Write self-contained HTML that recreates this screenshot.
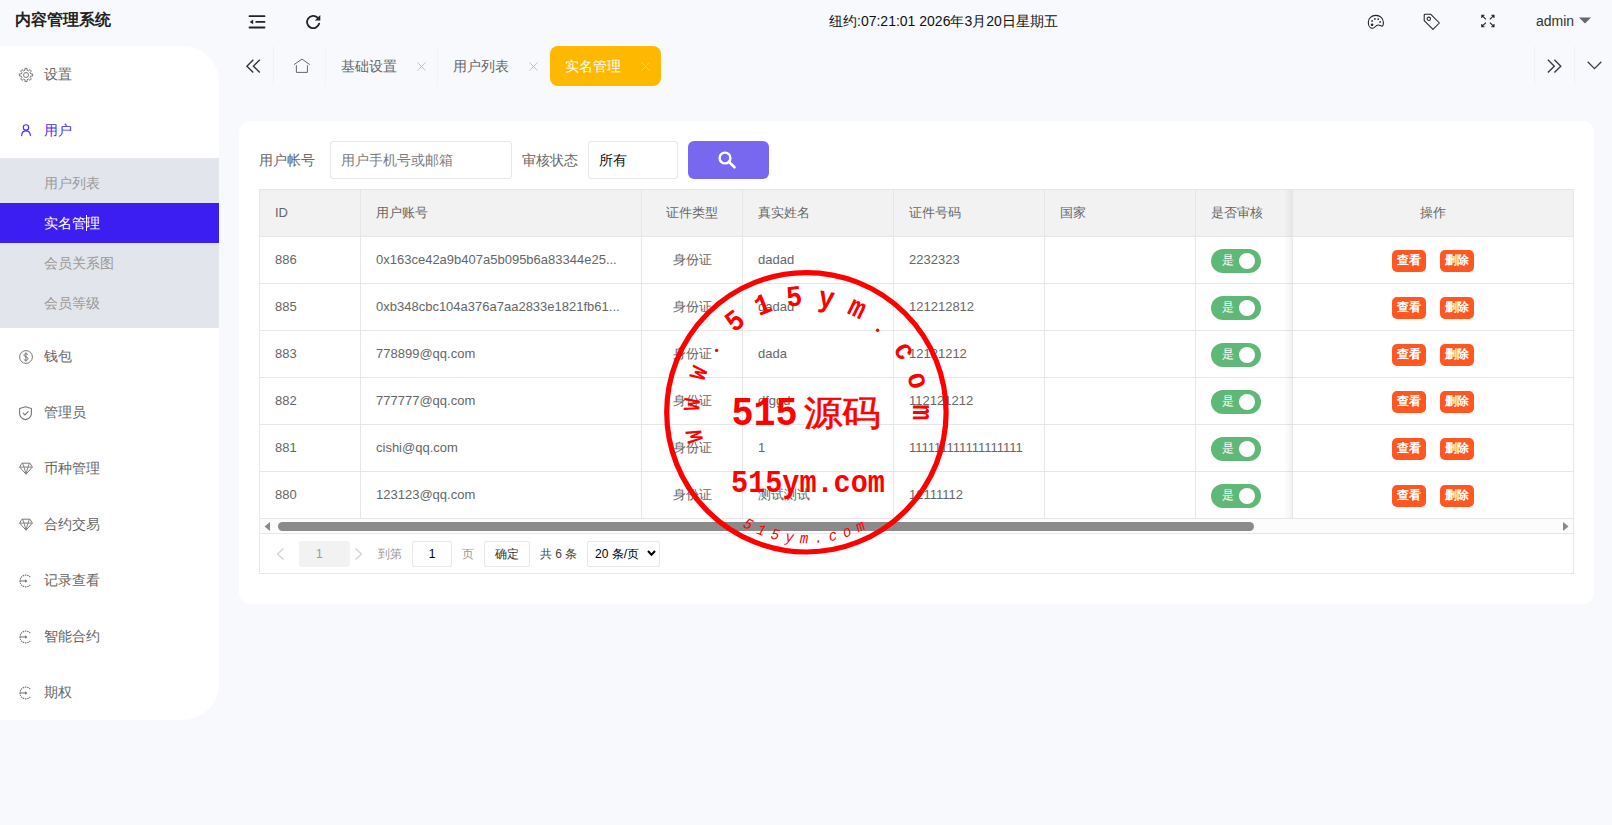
<!DOCTYPE html>
<html><head><meta charset="utf-8"><title>内容管理系统</title>
<style>
*{box-sizing:border-box;margin:0;padding:0}
html,body{width:1612px;height:825px;overflow:hidden}
body{background:#f8f9fc;font-family:"Liberation Sans",sans-serif;font-size:14px;color:#666;position:relative}
.a{position:absolute;white-space:nowrap}
.t14{font-size:14px;line-height:20px}
.t12{font-size:12px;line-height:16px}
.t13{font-size:13px;line-height:20px}
svg{position:absolute;overflow:visible}
</style></head><body>

<div class="a" style="left:15px;top:10px;font-size:16px;line-height:20px;font-weight:bold;color:#222">内容管理系统</div>
<svg style="left:249px;top:14px" width="16" height="16" viewBox="0 0 16 16">
<path d="M0.5 2.2H15.5M7.2 7.9H15.5M0.5 13.5H15.5" stroke="#222" stroke-width="1.8" stroke-linecap="round" fill="none"/>
<path d="M0.6 7.9L4.2 5.6V10.2Z" fill="#222"/></svg>
<svg style="left:305px;top:14px" width="16" height="16" viewBox="0 0 16 16">
<path d="M14.2 9.6A6.2 6.2 0 1 1 12.6 3.6" stroke="#222" stroke-width="1.8" fill="none" stroke-linecap="round"/>
<path d="M15.3 1V6.5H9.8Z" fill="#222"/></svg>
<div class="a t14" style="left:829px;top:11px;color:#111">纽约:07:21:01 2026年3月20日星期五</div>
<svg style="left:1367px;top:14px" width="18" height="16" viewBox="0 0 18 16">
<path d="M8.8 1.4C4.5 1.4 1.3 4.4 1.3 8.2C1.3 11.9 3.3 14.3 5.6 14.3C8 14.3 8.4 11 11.2 11C13.2 11 14.1 12.2 15 12.2C16.2 12.2 16.4 10.6 16.4 8.6C16.4 4.5 13.1 1.4 8.8 1.4Z" stroke="#222" stroke-width="1.1" fill="none"/>
<circle cx="5.1" cy="10.7" r="1.3" fill="#222"/><circle cx="5.1" cy="6.9" r="0.85" fill="#222"/><circle cx="7.9" cy="4.9" r="0.85" fill="#222"/>
<circle cx="11.2" cy="5.2" r="0.85" fill="#222"/><circle cx="13.1" cy="7.9" r="0.85" fill="#222"/></svg>
<svg style="left:1423px;top:13px" width="18" height="18" viewBox="0 0 18 18">
<path d="M2.3 1.2H7.6L16.4 10L10 16.4L1.2 7.6V2.3Q1.2 1.2 2.3 1.2Z" stroke="#222" stroke-width="1.05" fill="none" stroke-linejoin="round"/>
<circle cx="5.8" cy="5.8" r="1.7" stroke="#222" stroke-width="1.05" fill="none"/></svg>
<svg style="left:1481px;top:14px" width="14" height="14" viewBox="0 0 14 14">
<path d="M0.8 3.9V1.2H3.5M0.8 1.2L4.9 5.3M13 3.9V1.2H10.3M13 1.2L8.9 5.3M0.8 10V12.7H3.5M0.8 12.7L4.9 8.6M13 10V12.7H10.3M13 12.7L8.9 8.6" stroke="#222" stroke-width="1.1" fill="none"/></svg>
<div class="a t14" style="left:1536px;top:11px;color:#333">admin</div>
<svg style="left:1579px;top:17px" width="12" height="7" viewBox="0 0 12 7"><path d="M0 0.5H12L6 6.5Z" fill="#666"/></svg>
<div class="a" style="left:0;top:46px;width:219px;height:674px;background:#fff;border-radius:0 36px 36px 0"></div>
<div class="a" style="left:0;top:158px;width:219px;height:170px;background:#e3e5ec"></div>
<div class="a" style="left:0;top:203px;width:219px;height:40px;background:#3d1ef2"></div>
<div class="a t14" style="left:44px;top:64px;color:#666">设置</div>
<svg style="left:19px;top:68px" width="14" height="14" viewBox="0 0 14 14"><path d="M5.92 2.32 L5.95 0.38 L8.05 0.38 L8.08 2.32 L9.54 2.93 L10.94 1.58 L12.42 3.06 L11.07 4.46 L11.68 5.92 L13.62 5.95 L13.62 8.05 L11.68 8.08 L11.07 9.54 L12.42 10.94 L10.94 12.42 L9.54 11.07 L8.08 11.68 L8.05 13.62 L5.95 13.62 L5.92 11.68 L4.46 11.07 L3.06 12.42 L1.58 10.94 L2.93 9.54 L2.32 8.08 L0.38 8.05 L0.38 5.95 L2.32 5.92 L2.93 4.46 L1.58 3.06 L3.06 1.58 L4.46 2.93Z" stroke="#777" stroke-width="1" fill="none" stroke-linejoin="round"/><circle cx="7" cy="7" r="2.5" stroke="#777" stroke-width="1" fill="none"/></svg>
<div class="a t14" style="left:44px;top:120px;color:#4b2bf5">用户</div>
<svg style="left:21px;top:124px" width="10" height="12" viewBox="0 0 10 12"><circle cx="5" cy="3.4" r="2.7" stroke="#4b2bf5" stroke-width="1.15" fill="none"/><path d="M0.6 11.6C0.8 8.4 2.6 6.9 5 6.9C7.4 6.9 9.2 8.4 9.4 11.6" stroke="#4b2bf5" stroke-width="1.15" fill="none" stroke-linecap="round"/></svg>
<div class="a t14" style="left:44px;top:346px;color:#666">钱包</div>
<svg style="left:19px;top:350px" width="14" height="14" viewBox="0 0 14 14"><circle cx="7" cy="7" r="6.4" stroke="#777" stroke-width="1" fill="none"/><path d="M8.8 4.6C8.3 3.9 7.6 3.7 6.9 3.7C5.8 3.7 5 4.3 5 5.2C5 7.2 9 6.4 9 8.7C9 9.6 8.1 10.3 6.9 10.3C6.1 10.3 5.3 10 4.9 9.3M6.9 2.4V11.6" stroke="#777" stroke-width="1" fill="none"/></svg>
<div class="a t14" style="left:44px;top:402px;color:#666">管理员</div>
<svg style="left:19px;top:406px" width="14" height="14" viewBox="0 0 14 14"><path d="M6.5 0.7L12.4 2.6V7.4C12.4 10.6 9.6 12.7 6.5 13.8C3.4 12.7 0.6 10.6 0.6 7.4V2.6Z" stroke="#777" stroke-width="1.1" fill="none" stroke-linejoin="round"/><path d="M3.8 6.9L5.9 9L9.4 5.3" stroke="#777" stroke-width="1.1" fill="none"/></svg>
<div class="a t14" style="left:44px;top:458px;color:#666">币种管理</div>
<svg style="left:19px;top:462px" width="14" height="14" viewBox="0 0 14 14"><path d="M2.9 1.2H10.9L13.4 5.1L7 12.2L0.6 5.1Z" stroke="#777" stroke-width="1" fill="none" stroke-linejoin="round"/><path d="M0.8 5.1H13.2M3.6 1.4L5 5.1L7 11.8L9 5.1L10.4 1.4" stroke="#777" stroke-width="0.9" fill="none"/></svg>
<div class="a t14" style="left:44px;top:514px;color:#666">合约交易</div>
<svg style="left:19px;top:518px" width="14" height="14" viewBox="0 0 14 14"><path d="M2.9 1.2H10.9L13.4 5.1L7 12.2L0.6 5.1Z" stroke="#777" stroke-width="1" fill="none" stroke-linejoin="round"/><path d="M0.8 5.1H13.2M3.6 1.4L5 5.1L7 11.8L9 5.1L10.4 1.4" stroke="#777" stroke-width="0.9" fill="none"/></svg>
<div class="a t14" style="left:44px;top:570px;color:#666">记录查看</div>
<svg style="left:19px;top:574px" width="14" height="14" viewBox="0 0 14 14"><path d="M11.3 3.1A5.9 5.9 0 1 0 11.3 10.9" stroke="#777" stroke-width="1.1" fill="none" stroke-dasharray="1.5 0.7"/><path d="M0.9 7H6.4" stroke="#777" stroke-width="1.1" fill="none"/><path d="M6 5.2L8.6 7L6 8.8Z" fill="#777"/></svg>
<div class="a t14" style="left:44px;top:626px;color:#666">智能合约</div>
<svg style="left:19px;top:630px" width="14" height="14" viewBox="0 0 14 14"><path d="M11.3 3.1A5.9 5.9 0 1 0 11.3 10.9" stroke="#777" stroke-width="1.1" fill="none" stroke-dasharray="1.5 0.7"/><path d="M0.9 7H6.4" stroke="#777" stroke-width="1.1" fill="none"/><path d="M6 5.2L8.6 7L6 8.8Z" fill="#777"/></svg>
<div class="a t14" style="left:44px;top:682px;color:#666">期权</div>
<svg style="left:19px;top:686px" width="14" height="14" viewBox="0 0 14 14"><path d="M11.3 3.1A5.9 5.9 0 1 0 11.3 10.9" stroke="#777" stroke-width="1.1" fill="none" stroke-dasharray="1.5 0.7"/><path d="M0.9 7H6.4" stroke="#777" stroke-width="1.1" fill="none"/><path d="M6 5.2L8.6 7L6 8.8Z" fill="#777"/></svg>
<div class="a" style="left:86px;top:215px;width:1px;height:16px;background:#fff"></div>
<div class="a t14" style="left:44px;top:173px;color:#999">用户列表</div>
<div class="a t14" style="left:44px;top:213px;color:#fff">实名管理</div>
<div class="a t14" style="left:44px;top:253px;color:#999">会员关系图</div>
<div class="a t14" style="left:44px;top:293px;color:#999">会员等级</div>
<div class="a" style="left:273px;top:46px;width:1px;height:40px;background:#f2f2f3"></div>
<div class="a" style="left:325px;top:46px;width:1px;height:40px;background:#f2f2f3"></div>
<div class="a" style="left:437px;top:46px;width:1px;height:40px;background:#f2f2f3"></div>
<div class="a" style="left:549px;top:46px;width:1px;height:40px;background:#f2f2f3"></div>
<div class="a" style="left:1534px;top:46px;width:1px;height:40px;background:#f2f2f3"></div>
<div class="a" style="left:1574px;top:46px;width:1px;height:40px;background:#f2f2f3"></div>
<svg style="left:246px;top:59px" width="15" height="15" viewBox="0 0 15 15">
<path d="M7.3 0.8L0.9 7.2L7.3 13.6M13.8 0.8L7.4 7.2L13.8 13.6" stroke="#3a3434" stroke-width="1.4" fill="none"/></svg>
<svg style="left:293px;top:58px" width="18" height="15" viewBox="0 0 18 15">
<path d="M1 6.6L9 1.1L16.8 6.6M3.4 7.2V14.4H14.4V7.2" stroke="#666" stroke-width="1" fill="none"/></svg>
<div class="a t14" style="left:341px;top:56px;color:#666">基础设置</div>
<svg style="left:417px;top:62px" width="9" height="9" viewBox="0 0 9 9"><path d="M0.5 0.5L8.5 8.5M8.5 0.5L0.5 8.5" stroke="#c2c2c2" stroke-width="1" fill="none"/></svg>
<div class="a t14" style="left:453px;top:56px;color:#666">用户列表</div>
<svg style="left:529px;top:62px" width="9" height="9" viewBox="0 0 9 9"><path d="M0.5 0.5L8.5 8.5M8.5 0.5L0.5 8.5" stroke="#c2c2c2" stroke-width="1" fill="none"/></svg>
<div class="a" style="left:550px;top:46px;width:111px;height:40px;background:#ffb800;border-radius:8px"></div>
<div class="a t14" style="left:565px;top:56px;color:#fff">实名管理</div>
<svg style="left:641px;top:62px" width="9" height="9" viewBox="0 0 9 9"><path d="M0.5 0.5L8.5 8.5M8.5 0.5L0.5 8.5" stroke="#d9d2bd" stroke-width="1" fill="none"/></svg>
<svg style="left:1547px;top:59px" width="15" height="15" viewBox="0 0 15 15">
<path d="M0.9 0.8L7.3 7.2L0.9 13.6M7.4 0.8L13.8 7.2L7.4 13.6" stroke="#383c46" stroke-width="1.4" fill="none"/></svg>
<svg style="left:1587px;top:61px" width="15" height="9" viewBox="0 0 15 9">
<path d="M0.7 0.8L7.5 7.6L14.3 0.8" stroke="#383c46" stroke-width="1.3" fill="none"/></svg>
<div class="a" style="left:239px;top:121px;width:1355px;height:483px;background:#fff;border-radius:12px"></div>
<div class="a t14" style="left:259px;top:150px;color:#666">用户帐号</div>
<div class="a" style="left:330px;top:141px;width:182px;height:38px;border:1px solid #e6e6e6;border-radius:3px;background:#fff"></div>
<div class="a t14" style="left:341px;top:150px;color:#7a7a7a">用户手机号或邮箱</div>
<div class="a t14" style="left:522px;top:150px;color:#666">审核状态</div>
<div class="a" style="left:588px;top:141px;width:90px;height:38px;border:1px solid #e6e6e6;border-radius:3px;background:#fff"></div>
<div class="a t14" style="left:599px;top:150px;color:#111">所有</div>
<div class="a" style="left:688px;top:141px;width:81px;height:38px;background:#7868f0;border-radius:6px"></div>
<svg style="left:718px;top:151px" width="19" height="18" viewBox="0 0 19 18">
<circle cx="7" cy="7" r="5.4" stroke="#fff" stroke-width="2.4" fill="none"/><path d="M11 11L16.5 16.3" stroke="#fff" stroke-width="2.6" stroke-linecap="round"/></svg>
<div class="a" style="left:260px;top:190px;width:1313px;height:46px;background:#f2f2f2"></div>
<div class="a" style="left:259px;top:189px;width:1315px;height:1px;background:#e6e6e6"></div>
<div class="a" style="left:259px;top:236px;width:1315px;height:1px;background:#e6e6e6"></div>
<div class="a" style="left:259px;top:283px;width:1315px;height:1px;background:#e6e6e6"></div>
<div class="a" style="left:259px;top:330px;width:1315px;height:1px;background:#e6e6e6"></div>
<div class="a" style="left:259px;top:377px;width:1315px;height:1px;background:#e6e6e6"></div>
<div class="a" style="left:259px;top:424px;width:1315px;height:1px;background:#e6e6e6"></div>
<div class="a" style="left:259px;top:471px;width:1315px;height:1px;background:#e6e6e6"></div>
<div class="a" style="left:259px;top:518px;width:1315px;height:1px;background:#e6e6e6"></div>
<div class="a" style="left:259px;top:533px;width:1315px;height:1px;background:#e6e6e6"></div>
<div class="a" style="left:259px;top:573px;width:1315px;height:1px;background:#e6e6e6"></div>
<div class="a" style="left:259px;top:189px;width:1px;height:385px;background:#e6e6e6"></div>
<div class="a" style="left:360px;top:189px;width:1px;height:330px;background:#e6e6e6"></div>
<div class="a" style="left:641px;top:189px;width:1px;height:330px;background:#e6e6e6"></div>
<div class="a" style="left:742px;top:189px;width:1px;height:330px;background:#e6e6e6"></div>
<div class="a" style="left:893px;top:189px;width:1px;height:330px;background:#e6e6e6"></div>
<div class="a" style="left:1044px;top:189px;width:1px;height:330px;background:#e6e6e6"></div>
<div class="a" style="left:1195px;top:189px;width:1px;height:330px;background:#e6e6e6"></div>
<div class="a" style="left:1292px;top:189px;width:1px;height:330px;background:#e6e6e6"></div>
<div class="a" style="left:1573px;top:189px;width:1px;height:385px;background:#e6e6e6"></div>
<div class="a" style="left:1284px;top:190px;width:8px;height:328px;background:linear-gradient(to right,rgba(0,0,0,0),rgba(0,0,0,.05))"></div>
<div class="a t13" style="left:275px;top:203px;color:#666">ID</div>
<div class="a t13" style="left:376px;top:203px;color:#666">用户账号</div>
<div class="a t13" style="left:642px;top:203px;width:100px;text-align:center;color:#666">证件类型</div>
<div class="a t13" style="left:758px;top:203px;color:#666">真实姓名</div>
<div class="a t13" style="left:909px;top:203px;color:#666">证件号码</div>
<div class="a t13" style="left:1060px;top:203px;color:#666">国家</div>
<div class="a t13" style="left:1211px;top:203px;color:#666">是否审核</div>
<div class="a t13" style="left:1293px;top:203px;width:280px;text-align:center;color:#666">操作</div>
<div class="a t13" style="left:275px;top:250px;color:#666">886</div>
<div class="a t13" style="left:376px;top:250px;color:#666">0x163ce42a9b407a5b095b6a83344e25...</div>
<div class="a t13" style="left:642px;top:250px;width:100px;text-align:center;color:#666">身份证</div>
<div class="a t13" style="left:758px;top:250px;color:#666">dadad</div>
<div class="a t13" style="left:909px;top:250px;color:#666">2232323</div>
<div class="a" style="left:1211px;top:249px;width:50px;height:24px;border-radius:12px;background:#5fb878"></div>
<div class="a t12" style="left:1222px;top:252px;color:#fff">是</div>
<div class="a" style="left:1239px;top:253px;width:16px;height:16px;border-radius:50%;background:#fff"></div>
<div class="a" style="left:1392px;top:250px;width:34px;height:22px;border-radius:5px;background:#ff5722"></div>
<div class="a t12" style="left:1392px;top:252px;width:34px;text-align:center;color:#fff;font-weight:bold">查看</div>
<div class="a" style="left:1440px;top:250px;width:34px;height:22px;border-radius:5px;background:#ff5722"></div>
<div class="a t12" style="left:1440px;top:252px;width:34px;text-align:center;color:#fff;font-weight:bold">删除</div>
<div class="a t13" style="left:275px;top:297px;color:#666">885</div>
<div class="a t13" style="left:376px;top:297px;color:#666">0xb348cbc104a376a7aa2833e1821fb61...</div>
<div class="a t13" style="left:642px;top:297px;width:100px;text-align:center;color:#666">身份证</div>
<div class="a t13" style="left:758px;top:297px;color:#666">dadad</div>
<div class="a t13" style="left:909px;top:297px;color:#666">121212812</div>
<div class="a" style="left:1211px;top:296px;width:50px;height:24px;border-radius:12px;background:#5fb878"></div>
<div class="a t12" style="left:1222px;top:299px;color:#fff">是</div>
<div class="a" style="left:1239px;top:300px;width:16px;height:16px;border-radius:50%;background:#fff"></div>
<div class="a" style="left:1392px;top:297px;width:34px;height:22px;border-radius:5px;background:#ff5722"></div>
<div class="a t12" style="left:1392px;top:299px;width:34px;text-align:center;color:#fff;font-weight:bold">查看</div>
<div class="a" style="left:1440px;top:297px;width:34px;height:22px;border-radius:5px;background:#ff5722"></div>
<div class="a t12" style="left:1440px;top:299px;width:34px;text-align:center;color:#fff;font-weight:bold">删除</div>
<div class="a t13" style="left:275px;top:344px;color:#666">883</div>
<div class="a t13" style="left:376px;top:344px;color:#666">778899@qq.com</div>
<div class="a t13" style="left:642px;top:344px;width:100px;text-align:center;color:#666">身份证</div>
<div class="a t13" style="left:758px;top:344px;color:#666">dada</div>
<div class="a t13" style="left:909px;top:344px;color:#666">12121212</div>
<div class="a" style="left:1211px;top:343px;width:50px;height:24px;border-radius:12px;background:#5fb878"></div>
<div class="a t12" style="left:1222px;top:346px;color:#fff">是</div>
<div class="a" style="left:1239px;top:347px;width:16px;height:16px;border-radius:50%;background:#fff"></div>
<div class="a" style="left:1392px;top:344px;width:34px;height:22px;border-radius:5px;background:#ff5722"></div>
<div class="a t12" style="left:1392px;top:346px;width:34px;text-align:center;color:#fff;font-weight:bold">查看</div>
<div class="a" style="left:1440px;top:344px;width:34px;height:22px;border-radius:5px;background:#ff5722"></div>
<div class="a t12" style="left:1440px;top:346px;width:34px;text-align:center;color:#fff;font-weight:bold">删除</div>
<div class="a t13" style="left:275px;top:391px;color:#666">882</div>
<div class="a t13" style="left:376px;top:391px;color:#666">777777@qq.com</div>
<div class="a t13" style="left:642px;top:391px;width:100px;text-align:center;color:#666">身份证</div>
<div class="a t13" style="left:758px;top:391px;color:#666">dfggd</div>
<div class="a t13" style="left:909px;top:391px;color:#666">112121212</div>
<div class="a" style="left:1211px;top:390px;width:50px;height:24px;border-radius:12px;background:#5fb878"></div>
<div class="a t12" style="left:1222px;top:393px;color:#fff">是</div>
<div class="a" style="left:1239px;top:394px;width:16px;height:16px;border-radius:50%;background:#fff"></div>
<div class="a" style="left:1392px;top:391px;width:34px;height:22px;border-radius:5px;background:#ff5722"></div>
<div class="a t12" style="left:1392px;top:393px;width:34px;text-align:center;color:#fff;font-weight:bold">查看</div>
<div class="a" style="left:1440px;top:391px;width:34px;height:22px;border-radius:5px;background:#ff5722"></div>
<div class="a t12" style="left:1440px;top:393px;width:34px;text-align:center;color:#fff;font-weight:bold">删除</div>
<div class="a t13" style="left:275px;top:438px;color:#666">881</div>
<div class="a t13" style="left:376px;top:438px;color:#666">cishi@qq.com</div>
<div class="a t13" style="left:642px;top:438px;width:100px;text-align:center;color:#666">身份证</div>
<div class="a t13" style="left:758px;top:438px;color:#666">1</div>
<div class="a t13" style="left:909px;top:438px;color:#666">111111111111111111</div>
<div class="a" style="left:1211px;top:437px;width:50px;height:24px;border-radius:12px;background:#5fb878"></div>
<div class="a t12" style="left:1222px;top:440px;color:#fff">是</div>
<div class="a" style="left:1239px;top:441px;width:16px;height:16px;border-radius:50%;background:#fff"></div>
<div class="a" style="left:1392px;top:438px;width:34px;height:22px;border-radius:5px;background:#ff5722"></div>
<div class="a t12" style="left:1392px;top:440px;width:34px;text-align:center;color:#fff;font-weight:bold">查看</div>
<div class="a" style="left:1440px;top:438px;width:34px;height:22px;border-radius:5px;background:#ff5722"></div>
<div class="a t12" style="left:1440px;top:440px;width:34px;text-align:center;color:#fff;font-weight:bold">删除</div>
<div class="a t13" style="left:275px;top:485px;color:#666">880</div>
<div class="a t13" style="left:376px;top:485px;color:#666">123123@qq.com</div>
<div class="a t13" style="left:642px;top:485px;width:100px;text-align:center;color:#666">身份证</div>
<div class="a t13" style="left:758px;top:485px;color:#666">测试测试</div>
<div class="a t13" style="left:909px;top:485px;color:#666">12111112</div>
<div class="a" style="left:1211px;top:484px;width:50px;height:24px;border-radius:12px;background:#5fb878"></div>
<div class="a t12" style="left:1222px;top:487px;color:#fff">是</div>
<div class="a" style="left:1239px;top:488px;width:16px;height:16px;border-radius:50%;background:#fff"></div>
<div class="a" style="left:1392px;top:485px;width:34px;height:22px;border-radius:5px;background:#ff5722"></div>
<div class="a t12" style="left:1392px;top:487px;width:34px;text-align:center;color:#fff;font-weight:bold">查看</div>
<div class="a" style="left:1440px;top:485px;width:34px;height:22px;border-radius:5px;background:#ff5722"></div>
<div class="a t12" style="left:1440px;top:487px;width:34px;text-align:center;color:#fff;font-weight:bold">删除</div>
<div class="a" style="left:260px;top:519px;width:1313px;height:14px;background:#fcfcfc"></div>
<svg style="left:264px;top:522px" width="7" height="9" viewBox="0 0 7 9"><path d="M6 0V9L0.5 4.5Z" fill="#888"/></svg>
<svg style="left:1562px;top:522px" width="7" height="9" viewBox="0 0 7 9"><path d="M1 0V9L6.5 4.5Z" fill="#888"/></svg>
<div class="a" style="left:278px;top:522px;width:976px;height:9px;border-radius:5px;background:#8a8a8a"></div>
<svg style="left:276px;top:548px" width="9" height="12" viewBox="0 0 9 12"><path d="M7.5 0.5L1.5 6L7.5 11.5" stroke="#d2d2d2" stroke-width="1.3" fill="none"/></svg>
<div class="a" style="left:299px;top:541px;width:51px;height:26px;background:#f2f2f2;border-radius:3px"></div>
<div class="a t12" style="left:316px;top:546px;color:#999">1</div>
<svg style="left:354px;top:548px" width="9" height="12" viewBox="0 0 9 12"><path d="M1.5 0.5L7.5 6L1.5 11.5" stroke="#d2d2d2" stroke-width="1.3" fill="none"/></svg>
<div class="a t12" style="left:378px;top:546px;color:#999">到第</div>
<div class="a" style="left:412px;top:541px;width:40px;height:26px;border:1px solid #e6e6e6;border-radius:2px"></div>
<div class="a t12" style="left:412px;top:546px;width:40px;text-align:center;color:#000">1</div>
<div class="a t12" style="left:462px;top:546px;color:#999">页</div>
<div class="a" style="left:484px;top:541px;width:46px;height:26px;border:1px solid #e6e6e6;border-radius:2px"></div>
<div class="a t12" style="left:484px;top:546px;width:46px;text-align:center;color:#333">确定</div>
<div class="a t12" style="left:540px;top:546px;color:#444">共 6 条</div>
<div class="a" style="left:587px;top:541px;width:73px;height:26px;border:1px solid #e6e6e6;border-radius:2px"></div>
<div class="a t12" style="left:595px;top:546px;color:#000">20 条/页</div>
<svg style="left:647px;top:550px" width="9" height="7" viewBox="0 0 9 7"><path d="M1 1L4.5 4.8L8 1" stroke="#000" stroke-width="2" fill="none"/></svg>
<svg style="left:0;top:0" width="1612" height="825" viewBox="0 0 1612 825">
<circle cx="806.4" cy="412.3" r="139.7" stroke="#f00" stroke-width="5.2" fill="none"/>
<text transform="translate(701.84 434.53) rotate(-102.00) scale(0.80 1.12)" text-anchor="middle" font-family="Liberation Mono" font-weight="bold" font-size="26.4" fill="#f00">w</text>
<text transform="translate(699.76 404.84) rotate(-86.00) scale(0.80 1.12)" text-anchor="middle" font-family="Liberation Mono" font-weight="bold" font-size="26.4" fill="#f00">w</text>
<text transform="translate(705.95 375.74) rotate(-70.00) scale(0.80 1.12)" text-anchor="middle" font-family="Liberation Mono" font-weight="bold" font-size="26.4" fill="#f00">w</text>
<text transform="translate(740.59 328.06) rotate(-38.00) scale(1.00 1.12)" text-anchor="middle" font-family="Liberation Mono" font-weight="bold" font-size="26.4" fill="#f00">5</text>
<text transform="translate(766.35 313.18) rotate(-22.00) scale(1.00 1.12)" text-anchor="middle" font-family="Liberation Mono" font-weight="bold" font-size="26.4" fill="#f00">1</text>
<text transform="translate(795.23 305.99) rotate(-6.00) scale(1.00 1.12)" text-anchor="middle" font-family="Liberation Mono" font-weight="bold" font-size="26.4" fill="#f00">5</text>
<text transform="translate(824.96 307.02) rotate(10.00) scale(1.00 1.12)" text-anchor="middle" font-family="Liberation Mono" font-weight="bold" font-size="26.4" fill="#f00">y</text>
<text transform="translate(853.26 316.22) rotate(26.00) scale(1.00 1.12)" text-anchor="middle" font-family="Liberation Mono" font-weight="bold" font-size="26.4" fill="#f00">m</text>
<text transform="translate(897.06 355.65) rotate(58.00) scale(1.00 1.12)" text-anchor="middle" font-family="Liberation Mono" font-weight="bold" font-size="26.4" fill="#f00">c</text>
<text transform="translate(909.16 382.83) rotate(74.00) scale(1.00 1.12)" text-anchor="middle" font-family="Liberation Mono" font-weight="bold" font-size="26.4" fill="#f00">o</text>
<text transform="translate(913.30 412.30) rotate(90.00) scale(1.00 1.12)" text-anchor="middle" font-family="Liberation Mono" font-weight="bold" font-size="26.4" fill="#f00">m</text>
<circle cx="716.6" cy="350.4" r="1.7" fill="#f00"/><circle cx="877.6" cy="330.3" r="1.7" fill="#f00"/>
<text transform="translate(745.91 528.50) rotate(27.50) scale(1 1.12)" text-anchor="middle" font-family="Liberation Mono" font-style="italic" font-size="14.0" fill="#f00">5</text>
<text transform="translate(759.67 534.68) rotate(20.90) scale(1 1.12)" text-anchor="middle" font-family="Liberation Mono" font-style="italic" font-size="14.0" fill="#f00">1</text>
<text transform="translate(774.04 539.24) rotate(14.30) scale(1 1.12)" text-anchor="middle" font-family="Liberation Mono" font-style="italic" font-size="14.0" fill="#f00">5</text>
<text transform="translate(788.85 542.12) rotate(7.70) scale(1 1.12)" text-anchor="middle" font-family="Liberation Mono" font-style="italic" font-size="14.0" fill="#f00">y</text>
<text transform="translate(803.89 543.28) rotate(1.10) scale(1 1.12)" text-anchor="middle" font-family="Liberation Mono" font-style="italic" font-size="14.0" fill="#f00">m</text>
<text transform="translate(818.96 542.70) rotate(-5.50) scale(1 1.12)" text-anchor="middle" font-family="Liberation Mono" font-style="italic" font-size="14.0" fill="#f00">.</text>
<text transform="translate(833.86 540.39) rotate(-12.10) scale(1 1.12)" text-anchor="middle" font-family="Liberation Mono" font-style="italic" font-size="14.0" fill="#f00">c</text>
<text transform="translate(848.40 536.38) rotate(-18.70) scale(1 1.12)" text-anchor="middle" font-family="Liberation Mono" font-style="italic" font-size="14.0" fill="#f00">o</text>
<text transform="translate(862.38 530.73) rotate(-25.30) scale(1 1.12)" text-anchor="middle" font-family="Liberation Mono" font-style="italic" font-size="14.0" fill="#f00">m</text>
<text transform="translate(731.5 425.4) scale(1 1.13)" font-family="Liberation Mono" font-weight="bold" font-size="36.75" fill="#f00">515</text>
<text transform="translate(803.5 424.5) scale(1.05 0.95)" font-family="Liberation Sans" font-size="37" fill="#f00" stroke="#f00" stroke-width="0.6">源码</text>
<text transform="translate(731.05 492.3) scale(1 1.09)" font-family="Liberation Mono" font-weight="bold" font-size="28.5" fill="#f00">515ym.com</text>
</svg>
</body></html>
